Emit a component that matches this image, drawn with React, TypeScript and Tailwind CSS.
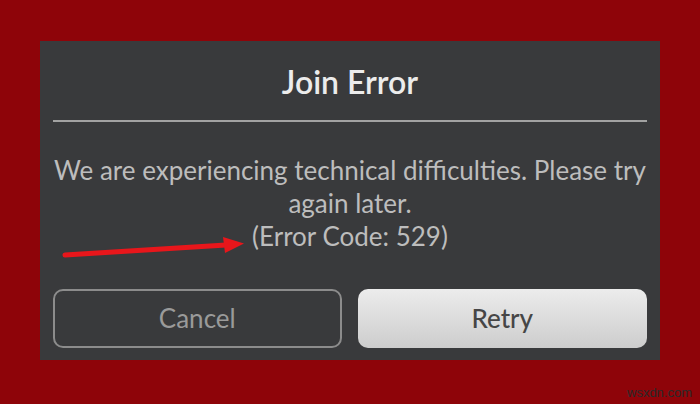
import React from 'react';

const App: React.FC = () => {
  return (
    <div
      className="relative w-[700px] h-[404px] bg-[#8e0409] pt-[41px] pl-[40px] overflow-hidden"
      style={{ fontFamily: 'Lato, "Open Sans", sans-serif' }}
    >
      <div className="w-[620px] h-[319px] bg-[#393a3c] flex flex-col px-[13px]">
        <h1 className="h-[79px] flex items-center justify-center text-[32px] font-semibold text-[#ececec] pt-[2px]">
          Join Error
        </h1>
        <div className="h-[2px] bg-[#a2a2a2]" />
        <div className="flex-1 flex flex-col items-center justify-center text-[26px] leading-[33px] text-[#bdbdbd] text-center pb-[4px] whitespace-nowrap">
          <p>We are experiencing technical difficulties. Please try</p>
          <p>again later.</p>
          <p>(Error Code: 529)</p>
        </div>
        <div className="flex gap-[16px] pb-[12px]">
          <button className="w-[289px] h-[59px] rounded-[10px] border-2 border-[#8c8c8c] text-[26px] text-[#9a9a9a]">
            Cancel
          </button>
          <button className="w-[290px] h-[59px] rounded-[10px] bg-gradient-to-b from-[#ececec] to-[#cdcdcd] text-[26px] text-[#464646] font-medium">
            Retry
          </button>
        </div>
      </div>

      <svg className="absolute left-[60px] top-[234px]" width="190" height="26" viewBox="0 0 190 26">
        <path d="M5 21 L166 11" stroke="#e8161b" strokeWidth="5" strokeLinecap="round" />
        <path d="M163 3 L184 9.5 L165 19 Z" fill="#e8161b" />
      </svg>

      <div
        className="absolute left-[627px] top-[385px] text-[13px] leading-[16px] text-[#2a2a2a]"
        style={{ fontFamily: '"Liberation Sans", sans-serif' }}
      >
        wsxdn.com
      </div>
    </div>
  );
};

export default App;
